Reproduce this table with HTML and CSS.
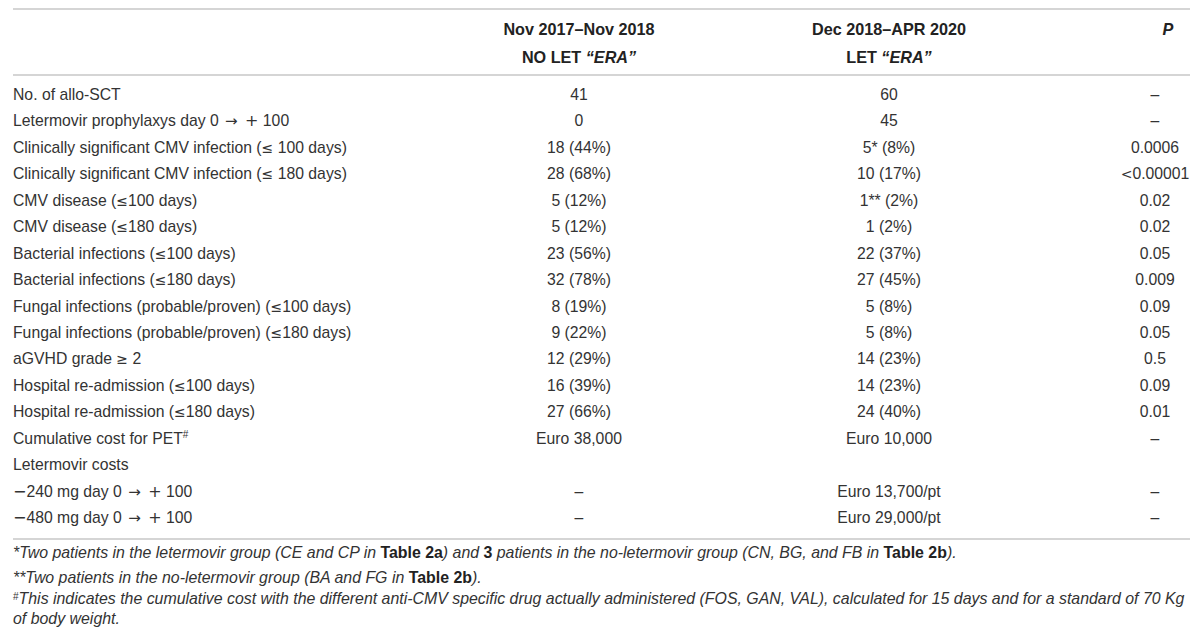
FILE: index.html
```html
<!DOCTYPE html>
<html>
<head>
<meta charset="utf-8">
<link rel="stylesheet" href="styles.css">
</head>
<body>
<div class="page">
  <table class="data">
    <colgroup>
      <col class="c-label">
      <col class="c-a">
      <col class="c-b">
      <col class="c-p">
    </colgroup>
    <thead>
      <tr>
        <th class="label"></th>
        <th class="num">Nov 2017–Nov 2018<br>NO LET <i>“ERA”</i></th>
        <th class="num">Dec 2018–APR 2020<br>LET <i>“ERA”</i></th>
        <th class="phead"><i>P</i></th>
      </tr>
    </thead>
    <tbody>
      <tr class="first"><td class="label">No. of allo-SCT</td><td class="num">41</td><td class="num">60</td><td class="pval">–</td></tr>
      <tr><td class="label">Letermovir prophylaxys day 0 <span class="arrow">→</span> <span class="plus">+</span> 100</td><td class="num">0</td><td class="num">45</td><td class="pval">–</td></tr>
      <tr><td class="label">Clinically significant CMV infection (<span class="sym">≤</span> 100 days)</td><td class="num">18 (44%)</td><td class="num">5* (8%)</td><td class="pval">0.0006</td></tr>
      <tr><td class="label">Clinically significant CMV infection (<span class="sym">≤</span> 180 days)</td><td class="num">28 (68%)</td><td class="num">10 (17%)</td><td class="pval"><span class="sym">&lt;</span>0.00001</td></tr>
      <tr><td class="label">CMV disease (<span class="sym">≤</span>100 days)</td><td class="num">5 (12%)</td><td class="num">1** (2%)</td><td class="pval">0.02</td></tr>
      <tr><td class="label">CMV disease (<span class="sym">≤</span>180 days)</td><td class="num">5 (12%)</td><td class="num">1 (2%)</td><td class="pval">0.02</td></tr>
      <tr><td class="label">Bacterial infections (<span class="sym">≤</span>100 days)</td><td class="num">23 (56%)</td><td class="num">22 (37%)</td><td class="pval">0.05</td></tr>
      <tr><td class="label">Bacterial infections (<span class="sym">≤</span>180 days)</td><td class="num">32 (78%)</td><td class="num">27 (45%)</td><td class="pval">0.009</td></tr>
      <tr><td class="label">Fungal infections (probable/proven) (<span class="sym">≤</span>100 days)</td><td class="num">8 (19%)</td><td class="num">5 (8%)</td><td class="pval">0.09</td></tr>
      <tr><td class="label">Fungal infections (probable/proven) (<span class="sym">≤</span>180 days)</td><td class="num">9 (22%)</td><td class="num">5 (8%)</td><td class="pval">0.05</td></tr>
      <tr><td class="label">aGVHD grade <span class="sym">≥</span> 2</td><td class="num">12 (29%)</td><td class="num">14 (23%)</td><td class="pval">0.5</td></tr>
      <tr><td class="label">Hospital re-admission (<span class="sym">≤</span>100 days)</td><td class="num">16 (39%)</td><td class="num">14 (23%)</td><td class="pval">0.09</td></tr>
      <tr><td class="label">Hospital re-admission (<span class="sym">≤</span>180 days)</td><td class="num">27 (66%)</td><td class="num">24 (40%)</td><td class="pval">0.01</td></tr>
      <tr><td class="label">Cumulative cost for PET<sup>#</sup></td><td class="num">Euro 38,000</td><td class="num">Euro 10,000</td><td class="pval">–</td></tr>
      <tr><td class="label">Letermovir costs</td><td class="num"></td><td class="num"></td><td class="pval"></td></tr>
      <tr><td class="label"><span class="minus">−</span>240 mg day 0 <span class="arrow">→</span> <span class="plus">+</span> 100</td><td class="num">–</td><td class="num">Euro 13,700/pt</td><td class="pval">–</td></tr>
      <tr class="last"><td class="label"><span class="minus">−</span>480 mg day 0 <span class="arrow">→</span> <span class="plus">+</span> 100</td><td class="num">–</td><td class="num">Euro 29,000/pt</td><td class="pval">–</td></tr>
    </tbody>
  </table>
  <div class="notes">
    <p class="note n1">*Two patients in the letermovir group (CE and CP in <b>Table 2a</b>) and <b>3</b> patients in the no-letermovir group (CN, BG, and FB in <b>Table 2b</b>).</p>
    <p class="note n2">**Two patients in the no-letermovir group (BA and FG in <b>Table 2b</b>).</p>
    <p class="note n3"><sup>#</sup>This indicates the cumulative cost with the different anti-CMV specific drug actually administered (FOS, GAN, VAL), calculated for 15 days and for a standard of 70 Kg of body weight.</p>
  </div>
</div>
</body>
</html>
```

FILE: styles.css
```css
html, body {
  margin: 0;
  padding: 0;
  background: #ffffff;
}

body {
  font-family: "Liberation Sans", Arial, sans-serif;
  color: #333333;
  font-size: 15.75px;
}

.page {
  width: 1177px;
  padding: 8px 0 0 13px;
}

.data {
  width: 1177px;
  border-collapse: collapse;
  table-layout: fixed;
  border-top: 2px solid #d5d5d5;
  border-bottom: 2px solid #d5d5d5;
}

.c-label { width: 417px; }
.c-a { width: 298px; }
.c-b { width: 322px; }
.c-p { width: 140px; }

.data th,
.data td {
  padding: 0;
  font-weight: normal;
  white-space: nowrap;
}

.data thead th {
  font-weight: bold;
  font-size: 16.2px;
  line-height: 28px;
  padding: 5px 0 3px;
  border-bottom: 2px solid #d5d5d5;
  vertical-align: top;
  color: #222222;
}

.data thead th.phead {
  text-align: center;
  padding-left: 96px;
}

.data tbody td {
  height: 26.44px;
  line-height: 26.44px;
}

.data tbody tr.first td {
  padding-top: 6px;
}

.data tbody tr.last td {
  padding-bottom: 7px;
}

.label {
  text-align: left;
}

.num {
  text-align: center;
}

.data tbody td.pval {
  text-align: center;
  padding-left: 70px;
}

.sym {
  font-family: "DejaVu Sans", sans-serif;
  font-size: 14px;
}

.arrow {
  font-family: "DejaVu Sans", sans-serif;
  font-size: 15px;
  margin: 0 1px 0 2px;
}

.plus {
  font-family: "DejaVu Sans", sans-serif;
  font-size: 16px;
  margin-left: 2px;
}

.minus {
  font-family: "DejaVu Sans", sans-serif;
  font-size: 16px;
}

sup {
  font-size: 10px;
  line-height: 0;
  vertical-align: 6px;
}

.notes {
  width: 1180px;
  padding-top: 3px;
}

.note {
  margin: 0;
  font-style: italic;
  font-size: 15.9px;
  line-height: 20px;
  color: #333333;
}

.note b {
  font-style: normal;
  color: #222222;
}

.note sup {
  font-style: normal;
  font-size: 10px;
  vertical-align: 4px;
}

.n1 {
  margin-bottom: 5px;
}

.n2 {
  margin-bottom: 1px;
}
```
